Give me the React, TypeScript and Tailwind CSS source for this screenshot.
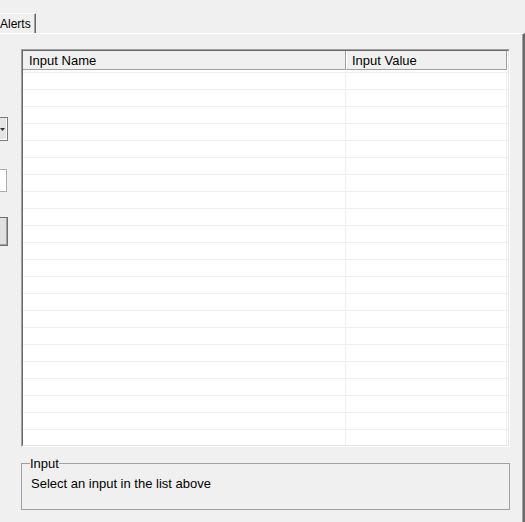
import React from "react";

const rows = Array.from({ length: 22 }, (_, i) => i);

export default function App() {
  return (
    <div className="w-[525px] h-[522px] bg-[#f0f0f0] overflow-hidden flex flex-col text-black font-['Liberation_Sans',Arial,sans-serif]">
      {/* tab strip */}
      <div className="h-[33px] pt-[13px] flex">
        <div className="w-[36px] h-[20px] border-t border-white border-r border-r-[#696969] shadow-[inset_-1px_0_0_#a0a0a0] text-[12px] leading-[20px]">
          Alerts
        </div>
      </div>

      {/* tab page */}
      <div className="flex-1 flex border-t border-white border-r-2 border-r-[#696969] shadow-[inset_-1px_0_0_#a0a0a0]">
        {/* controls that run off the left edge */}
        <div className="w-[21px] shrink-0 flex flex-col">
          <div className="w-[8px] overflow-hidden flex flex-col">
            <div className="mt-[83px] w-[8px] h-[24px] flex items-center justify-end border border-l-0 border-[#7a7a7a] bg-[#e5e5e5] shadow-[inset_-1px_-1px_0_#fff]">
              <svg width="5" height="3" viewBox="0 0 5 3" className="mr-[2px]">
                <polygon points="0,0 5,0 2.5,3" fill="#333" />
              </svg>
            </div>
            <div className="mt-[28px] w-[7px] h-[23px] border border-l-0 border-[#abadb3] bg-white" />
            <div className="mt-[25px] w-[8px] h-[29px] border border-l-0 border-[#707070] bg-[#e1e1e1] shadow-[inset_-1px_-1px_0_#a0a0a0]" />
          </div>
        </div>

        <div className="w-[489px] flex flex-col pt-[15px]">
          {/* input list */}
          <div className="h-[398px] border-t border-l border-[#a0a0a0] border-r border-b border-r-white border-b-white">
            <div className="h-full border-t border-l border-[#696969] border-r border-b border-r-[#e3e3e3] border-b-[#e3e3e3] bg-white overflow-hidden">
              <div className="flex h-[19px] text-[13px] leading-[20px]">
                <div className="w-[323px] bg-[#f0f0f0] border-b border-r border-[#a0a0a0] pl-[6px] overflow-hidden">Input Name</div>
                <div className="w-[161px] bg-[#f0f0f0] border-b border-r border-[#a0a0a0] border-l border-l-white pl-[5px] overflow-hidden">Input Value</div>
              </div>
              <div className="h-[2px]" />
              {rows.map((r) => (
                <div key={r} className="grid grid-cols-[323px_161px] h-[17px] border-t border-[#f0f0f0]">
                  <div className="border-r border-[#f0f0f0]" />
                  <div className="border-r border-[#f0f0f0]" />
                </div>
              ))}
            </div>
          </div>

          {/* selected input details */}
          <fieldset className="mt-[9px] h-[54px] border border-[#a0a0a0] px-[9px]">
            <legend className="text-[13px] leading-[15px] ml-[-1px] px-0">Input</legend>
            <div className="text-[13px] leading-[15px] mt-[5px]">Select an input in the list above</div>
          </fieldset>
        </div>
      </div>
    </div>
  );
}
